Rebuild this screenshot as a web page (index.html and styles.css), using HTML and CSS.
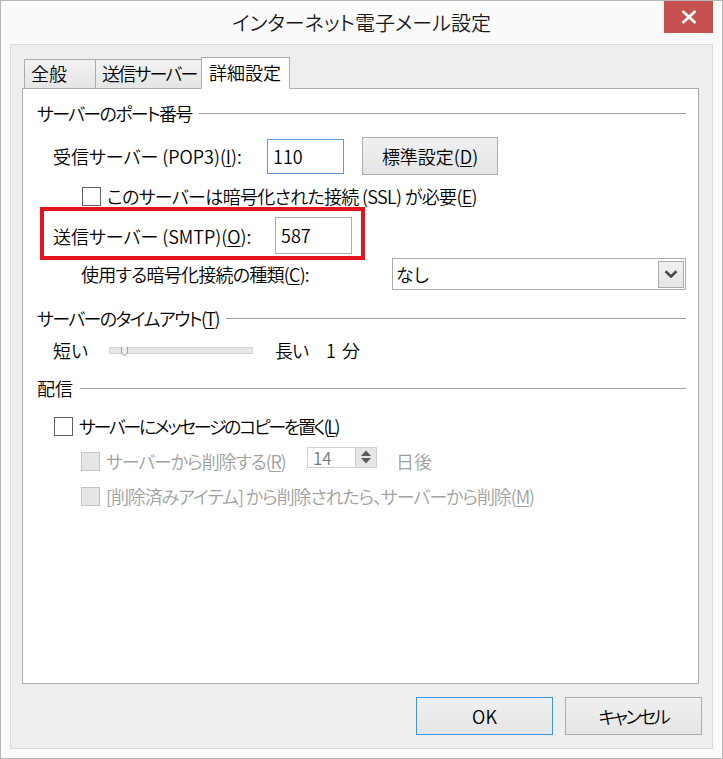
FILE: index.html
```html
<!DOCTYPE html>
<html lang="ja">
<head>
<meta charset="utf-8">
<title>インターネット電子メール設定</title>
<link rel="stylesheet" href="styles.css">
</head>
<body>
<div class="window">
  <div class="titlebar">
    <div class="spacer"></div>
    <div class="title">インターネット電子メール設定</div>
    <div class="close">
      <svg width="16" height="14" viewBox="0 0 16 14"><path d="M1.5 1 L14.5 13 M14.5 1 L1.5 13" stroke="#fff" stroke-width="2.6" fill="none"/></svg>
    </div>
  </div>
  <div class="client">
    <div class="tabs">
      <div class="tab tab-general">全般</div>
      <div class="tab tab-send">送信サーバー</div>
      <div class="tab tab-adv active">詳細設定</div>
    </div>
    <div class="panel">
      <div class="row hdr hdr-port"><span class="hdr-text">サーバーのポート番号</span><i class="rule"></i></div>

      <div class="row row-pop3">
        <span class="lbl lbl-pop3">受信サーバー (POP3)(<u>I</u>):</span>
        <div class="field focused">110</div>
        <div class="btn btn-default-set">標準設定(<u>D</u>)</div>
      </div>

      <div class="row row-ssl">
        <span class="chk"></span>
        <span class="chk-text">このサーバーは暗号化された接続 (SSL) が必要(<u>E</u>)</span>
      </div>

      <div class="row row-smtp">
        <span class="lbl lbl-smtp">送信サーバー (SMTP)(<u>O</u>):</span>
        <div class="field">587</div>
        <span class="highlight"></span>
      </div>

      <div class="row row-enc">
        <span class="lbl lbl-enc">使用する暗号化接続の種類(<u>C</u>):</span>
        <div class="select">
          <span class="select-text">なし</span>
          <span class="select-btn">
            <svg width="14" height="8" viewBox="0 0 14 8"><path d="M1.5 1.2 L7 6.5 L12.5 1.2" stroke="#4a4a4a" stroke-width="2.6" fill="none"/></svg>
          </span>
        </div>
      </div>

      <div class="row hdr hdr-timeout"><span class="hdr-text">サーバーのタイムアウト(<u>T</u>)</span><i class="rule"></i></div>

      <div class="row row-slider">
        <span class="lbl lbl-short">短い</span>
        <div class="track">
          <svg class="thumb" width="7" height="9" viewBox="0 0 7 9"><path d="M0.5 0 V6 L3.5 8.5 L6.5 6 V0" stroke="#9a9a9a" stroke-width="1" fill="#ececec"/></svg>
        </div>
        <span class="long">長い</span>
        <span class="num">1</span>
        <span class="unit">分</span>
      </div>

      <div class="row hdr hdr-deliv"><span class="hdr-text">配信</span><i class="rule"></i></div>

      <div class="row row-leave">
        <span class="chk"></span>
        <span class="chk-text">サーバーにメッセージのコピーを置く(<u>L</u>)</span>
      </div>

      <div class="row row-remove disabled">
        <span class="chk"></span>
        <span class="chk-text remove-text">サーバーから削除する(<u>R</u>)</span>
        <div class="spin">
          <span class="spin-val">14</span>
          <span class="spin-btns">
            <svg width="12" height="6" viewBox="0 0 12 6"><path d="M1 6 L6 0.5 L11 6 Z" fill="#5a5a5a"/></svg>
            <svg width="12" height="6" viewBox="0 0 12 6"><path d="M1 0 L6 5.5 L11 0 Z" fill="#5a5a5a"/></svg>
          </span>
        </div>
        <span class="days">日後</span>
      </div>

      <div class="row row-remove-deleted disabled">
        <span class="chk"></span>
        <span class="chk-text">[削除済みアイテム] から削除されたら、サーバーから削除(<u>M</u>)</span>
      </div>
    </div>
    <div class="buttons">
      <div class="btn btn-dialog default">OK</div>
      <div class="btn btn-dialog btn-cancel">キャンセル</div>
    </div>
  </div>
</div>
</body>
</html>
```

FILE: styles.css
```css
* { box-sizing: border-box; }
html, body { margin: 0; padding: 0; background: #fff; }
body {
  font-family: "Noto Sans CJK JP", "Noto Sans", sans-serif;
  font-feature-settings: "palt";
  font-weight: 350;
  color: #000;
}
u { text-decoration-thickness: 1px; text-underline-offset: 2px; }

.window {
  width: 723px;
  height: 759px;
  border: 1px solid #b6b6b6;
  background: #fafafa;
  display: flex;
  flex-direction: column;
}

.titlebar {
  height: 43px;
  display: grid;
  grid-template-columns: 58px 1fr 58px;
}
.title {
  align-self: center;
  text-align: center;
  font-size: 20px;
  line-height: 28px;
  color: #1a1a1a;
}
.close {
  width: 49px;
  height: 32px;
  background: #c75050;
  display: flex;
  align-items: center;
  justify-content: center;
}

.client {
  flex: 1;
  margin: 0 9px 9px;
  border: 1px solid #d9d9d9;
  background: #eeeeee;
  padding: 12px 10px 13px 11px;
  display: flex;
  flex-direction: column;
}

.tabs {
  height: 32px;
  margin-bottom: -1px;
  margin-right: 3px;
  padding-left: 2px;
  display: flex;
  align-items: flex-end;
  position: relative;
  z-index: 1;
}
.tab {
  height: 30px;
  border: 1px solid #acacac;
  background: linear-gradient(#f2f2f2, #e5e5e5);
  font-size: 18px;
  line-height: 27px;
  padding: 0 6px;
  white-space: nowrap;
}
.tab + .tab { margin-left: -1px; }
.tab-general { width: 72px; }
.tab-send { width: 107px; letter-spacing: -1.8px; }
.tab-adv { width: 89px; padding-left: 7px; }
.tab.active {
  height: 32px;
  background: #fff;
  border-bottom-color: #fff;
  line-height: 29px;
}

.panel {
  height: 596px;
  margin-right: 3px;
  border: 1px solid #acacac;
  background: #fff;
  padding: 0 12px 0 14px;
  display: flex;
  flex-direction: column;
  font-size: 18px;
}

.row {
  display: flex;
  align-items: center;
  height: 24px;
  line-height: 24px;
  white-space: nowrap;
  flex-shrink: 0;
}

.hdr .rule {
  flex: 1;
  height: 1px;
  background: #a0a0a0;
  margin-left: 7px;
}
.hdr-port { margin-top: 12px; }
.hdr-port .hdr-text { letter-spacing: -1.7px; }
.hdr-timeout { margin-top: 16px; }
.hdr-timeout .hdr-text { letter-spacing: -1.6px; }
.hdr-deliv { margin-top: 14px; }

.lbl { display: inline-block; }

.row-pop3 { margin-top: 12px; height: 38px; padding-left: 16px; }
.lbl-pop3 { width: 214px; }
.field {
  width: 77px;
  height: 35px;
  border: 1px solid #acacac;
  background: #fff;
  padding-left: 5px;
  line-height: 32px;
  font-size: 18px;
}
.field.focused { border-color: #5a9de0; }

.btn {
  border: 1px solid #acacac;
  background: linear-gradient(#f0f0f0, #e5e5e5);
  display: flex;
  align-items: center;
  justify-content: center;
  font-size: 18px;
}
.btn-default-set {
  width: 136px;
  height: 38px;
  margin-left: 18px;
}

.chk {
  width: 19px;
  height: 19px;
  border: 1px solid #606060;
  background: #fff;
  flex-shrink: 0;
}
.chk-text { margin-left: 6px; }

.row-ssl { margin-top: 9px; padding-left: 45px; }
.row-ssl .chk-text { letter-spacing: -0.65px; }

.row-smtp {
  margin-top: 9px;
  height: 37px;
  padding-left: 16px;
  position: relative;
}
.lbl-smtp { width: 222px; }
.row-smtp .field { height: 37px; line-height: 34px; }
.highlight {
  position: absolute;
  left: 3px;
  top: -10px;
  width: 325px;
  height: 53px;
  border: 4px solid #e3141e;
  pointer-events: none;
}

.row-enc { margin-top: 4px; height: 32px; padding-left: 44px; }
.lbl-enc { width: 311px; letter-spacing: -0.75px; }
.select {
  width: 294px;
  height: 32px;
  border: 1px solid #acacac;
  background: #fff;
  display: flex;
  align-items: center;
  justify-content: space-between;
  padding: 0 1px 0 3px;
}
.select-btn {
  width: 26px;
  height: 27px;
  border: 1px solid #acacac;
  background: linear-gradient(#f0f0f0, #e5e5e5);
  display: flex;
  align-items: center;
  justify-content: center;
}

.row-slider { margin-top: 8px; padding-left: 16px; }
.lbl-short { width: 56px; }
.track {
  width: 144px;
  height: 7px;
  background: #e7e7e7;
  border: 1px solid #d3d3d3;
  display: flex;
  padding-left: 11px;
}
.thumb { margin-top: -1px; }
.long { margin-left: 22px; letter-spacing: -1px; }
.num { margin-left: 18px; }
.unit { margin-left: 6px; }

.row-leave { margin-top: 14px; padding-left: 17px; }
.row-leave .chk-text { letter-spacing: -2.35px; }

.row-remove { margin-top: 11px; padding-left: 44px; }
.row-remove-deleted { margin-top: 11px; padding-left: 44px; }
.row-remove-deleted .chk-text { letter-spacing: -1.07px; }
.disabled { color: #a0a0a0; }
.disabled .chk { border-color: #c4c4c4; background: #e6e6e6; }
.remove-text { width: 201px; letter-spacing: -1.1px; }

.spin {
  width: 70px;
  height: 21px;
  margin-top: -8px;
  border: 1px solid #d0d0d0;
  background: #fff;
  display: flex;
  justify-content: space-between;
}
.spin-val {
  color: #7a7a7a;
  font-size: 17px;
  line-height: 19px;
  padding-left: 5px;
}
.spin-btns {
  width: 21px;
  background: #e6e6e6;
  border-left: 1px solid #d0d0d0;
  display: flex;
  flex-direction: column;
  align-items: center;
  justify-content: space-evenly;
}
.days { margin-left: 19px; }

.buttons {
  margin-top: 13px;
  height: 38px;
  display: flex;
  justify-content: flex-end;
  gap: 12px;
}
.btn-dialog { width: 137px; height: 38px; }
.btn-dialog.default { border-color: #3d94e8; }
.btn-cancel { letter-spacing: -2.4px; }
```
